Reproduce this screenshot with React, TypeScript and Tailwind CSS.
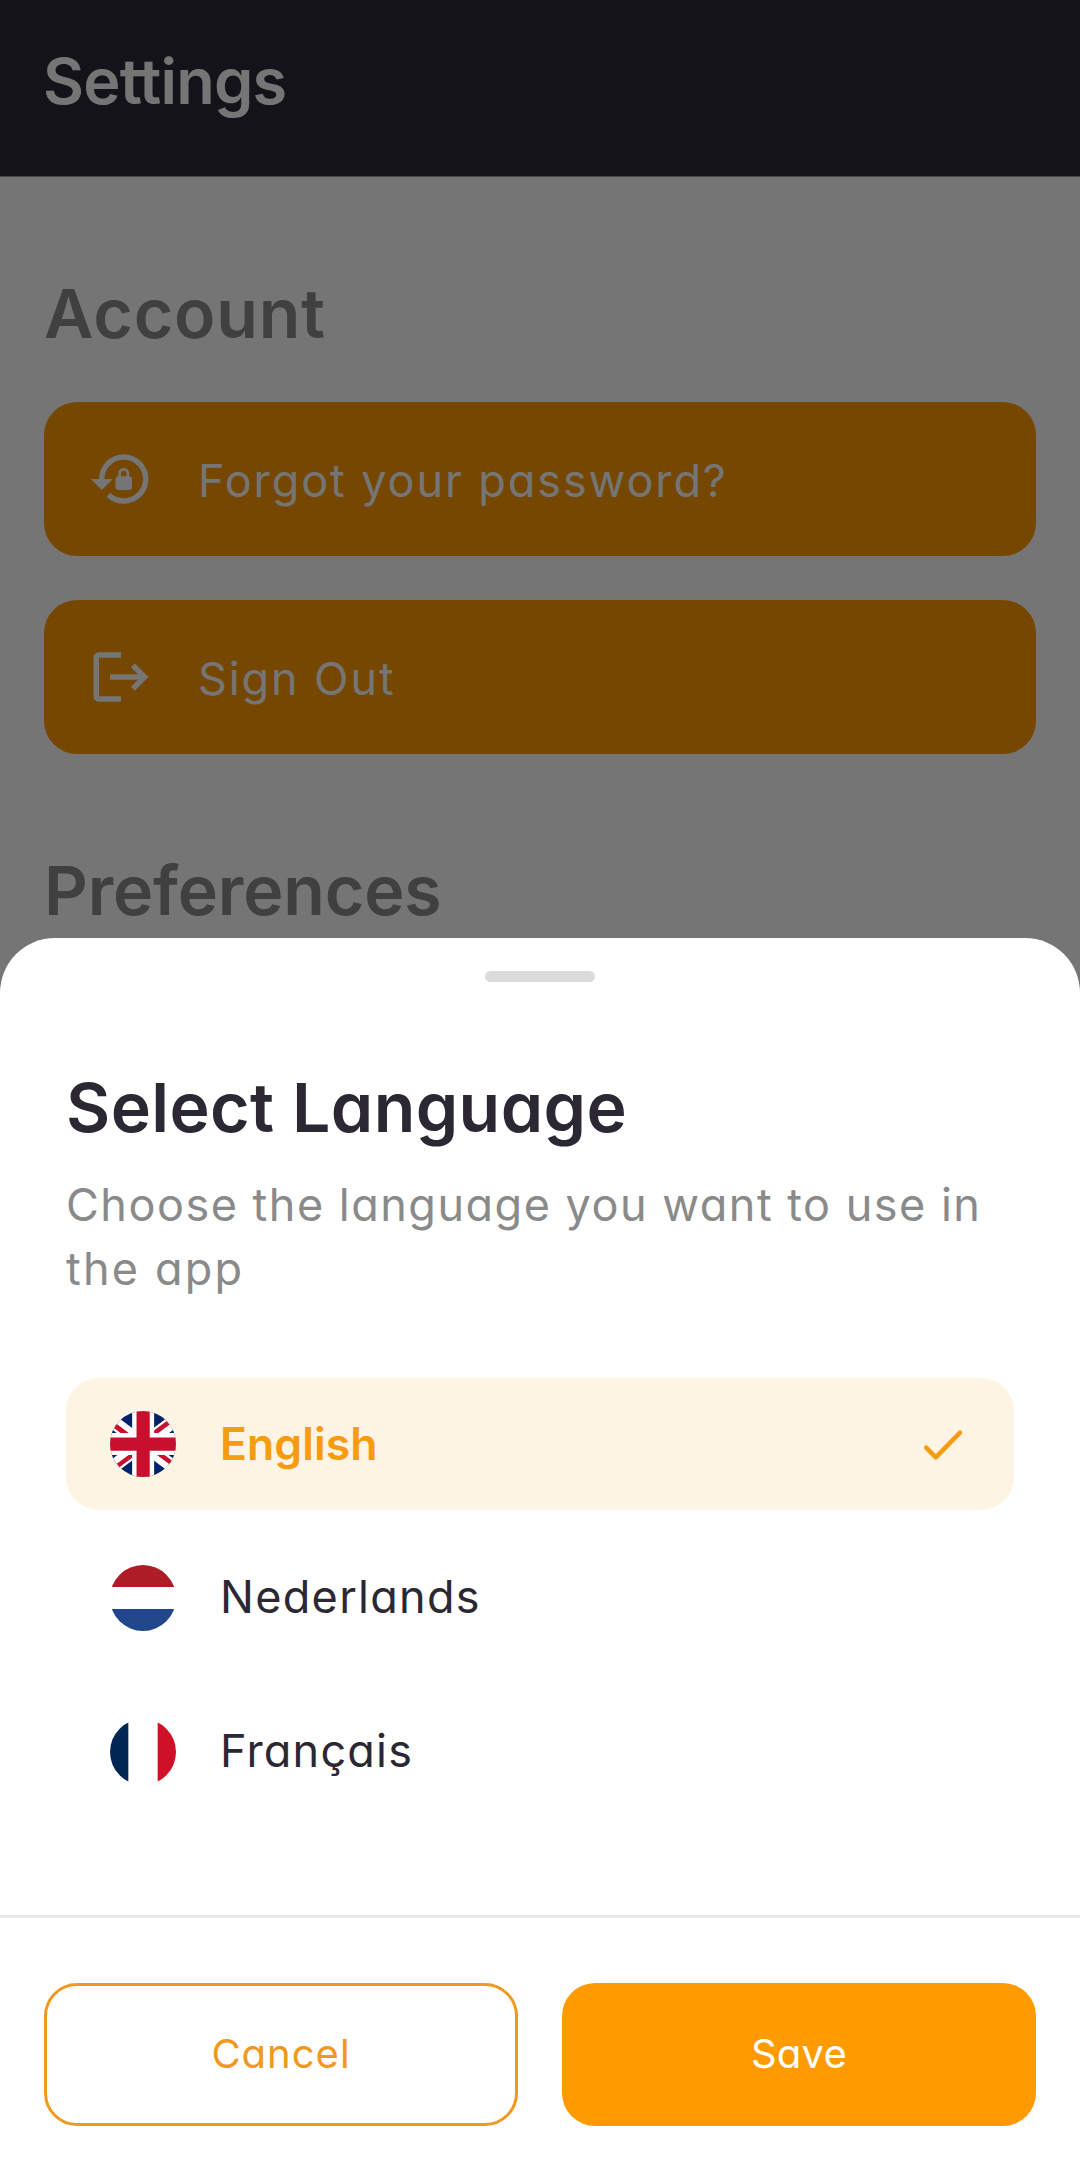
import type { ReactNode } from "react";
import { MdLockReset } from "react-icons/md";

function LogoutIcon() {
  return (
    <svg viewBox="0 0 24 24" className="size-[66px] shrink-0" fill="currentColor">
      <path d="M17 7l-1.41 1.41L18.17 11H8v2h10.17l-2.58 2.58L17 17l5-5M4 5h8V3H4c-1.1 0-2 .9-2 2v14c0 1.1.9 2 2 2h8v-2H4V5z" />
    </svg>
  );
}

function FlagGB() {
  return (
    <svg viewBox="80 0 480 480" className="size-[66px] shrink-0 rounded-full">
      <path fill="#012169" d="M0 0h640v480H0z" />
      <path fill="#FFF" d="m75 0 244 181L562 0h78v62L400 241l240 178v61h-80L320 301 81 480H0v-60l239-178L0 64V0h75z" />
      <path fill="#C8102E" d="m424 281 216 159v40L369 281h55zm-184 20 6 35L54 480H0l240-179zM640 0v3L391 191l2-44L590 0h50zM0 0l239 176h-60L0 42V0z" />
      <path fill="#FFF" d="M241 0v480h160V0H241zM0 160v160h640V160H0z" />
      <path fill="#C8102E" d="M0 193v96h640v-96H0zM273 0v480h96V0h-96z" />
    </svg>
  );
}

function FlagNL() {
  return (
    <svg viewBox="0 0 66 66" className="size-[66px] shrink-0 rounded-full">
      <path fill="#AE1C28" d="M0 0h66v22H0z" />
      <path fill="#FFF" d="M0 22h66v22H0z" />
      <path fill="#21468B" d="M0 44h66v22H0z" />
    </svg>
  );
}

function FlagFR() {
  return (
    <svg viewBox="0 0 66 66" className="size-[66px] shrink-0 rounded-full">
      <path fill="#FFF" d="M0 0h66v66H0z" />
      <path fill="#002654" d="M0 0h18.33v66H0z" />
      <path fill="#CE1126" d="M47.67 0H66v66H47.67z" />
    </svg>
  );
}

function ActionButton({ icon, label }: { icon: ReactNode; label: string }) {
  return (
    <button className="flex h-[154px] w-full items-center rounded-[33px] bg-[#ff9b00] px-11 text-white">
      {icon}
      <span className="ml-11 pt-[3px] text-[45px] leading-[64px] tracking-[1.9px]">{label}</span>
    </button>
  );
}

function LanguageRow({ flag, children, selected }: { flag: ReactNode; children: ReactNode; selected?: boolean }) {
  return (
    <li className={`flex h-[132px] items-center rounded-[33px] px-11 ${selected ? "bg-[#fef4e3]" : ""}`}>
      {flag}
      {children}
      {selected && (
        <svg viewBox="0 0 44 44" className="ml-auto mr-1 size-11" fill="none" stroke="#f79b0f" strokeWidth="4.4" strokeLinecap="round" strokeLinejoin="round">
          <path d="M4.2 25.6l9.6 9.8L38 10.6" />
        </svg>
      )}
    </li>
  );
}

export default function App() {
  return (
    <div className="relative h-[2168px] w-[1080px] overflow-hidden bg-white font-['Inter',sans-serif] [font-feature-settings:'cv11']">
      <header className="h-44 bg-[#2d2a38] px-11 pt-[41px]">
        <h1 className="-ml-px text-[63px] font-semibold leading-[80px] tracking-[-0.8px] text-white">Settings</h1>
      </header>
      <main className="border-t border-[#a0a0a0] px-11 pt-24">
        <h2 className="text-[68px] font-semibold leading-[80px] tracking-[0.8px] text-[#8c8c8c]">Account</h2>
        <div className="mt-[49px] flex flex-col gap-11">
          <ActionButton icon={<MdLockReset className="size-[66px] shrink-0" />} label="Forgot your password?" />
          <ActionButton icon={<LogoutIcon />} label="Sign Out" />
        </div>
        <h2 className="mt-24 text-[68px] font-semibold leading-[80px] tracking-[-0.15px] text-[#8c8c8c]">Preferences</h2>
      </main>

      <div className="absolute inset-0 bg-black/54" />

      <section className="absolute inset-x-0 bottom-0 flex h-[1230px] flex-col rounded-t-[55px] bg-white pt-[33px]">
        <div className="mx-auto h-[11px] w-[110px] rounded-full bg-[#dbdbdb]" />
        <div className="flex-1 px-[66px] pt-[85px]">
          <h2 className="text-[68px] font-semibold leading-[80px] tracking-[0.4px] text-[#2b2833]">Select Language</h2>
          <p className="mt-[26px] text-[45px] leading-[64px] text-[#8a8a8a]">
            <span className="block tracking-[1.5px] whitespace-nowrap">Choose the language you want to use in</span>
            <span className="block tracking-[2.2px]">the app</span>
          </p>
          <ul className="mt-[77px] flex flex-col gap-[22px]">
            <LanguageRow flag={<FlagGB />} selected>
              <span className="ml-11 text-[44.5px] font-semibold leading-[64px] tracking-[0.1px] text-[#f79b0f]">English</span>
            </LanguageRow>
            <LanguageRow flag={<FlagNL />}>
              <span className="-mt-0.5 ml-11 text-[45px] leading-[64px] tracking-[1.3px] text-[#2b2833]">Nederlands</span>
            </LanguageRow>
            <LanguageRow flag={<FlagFR />}>
              <span className="-mt-0.5 ml-11 text-[45px] leading-[64px] tracking-[1.2px] text-[#2b2833]">Français</span>
            </LanguageRow>
          </ul>
        </div>
        <footer className="flex h-[253px] gap-11 border-t-[3px] border-[#e8e8e8] px-11 pt-[65px]">
          <button className="h-[143px] w-[474px] rounded-[33px] border-[3px] border-[#f0991e] pb-0.5 text-[40px] tracking-[1px] text-[#f0991e]">Cancel</button>
          <button className="h-[143px] w-[474px] rounded-[33px] bg-[#ff9b00] pb-0.5 text-[40px] tracking-[0.2px] text-white">Save</button>
        </footer>
      </section>
    </div>
  );
}
